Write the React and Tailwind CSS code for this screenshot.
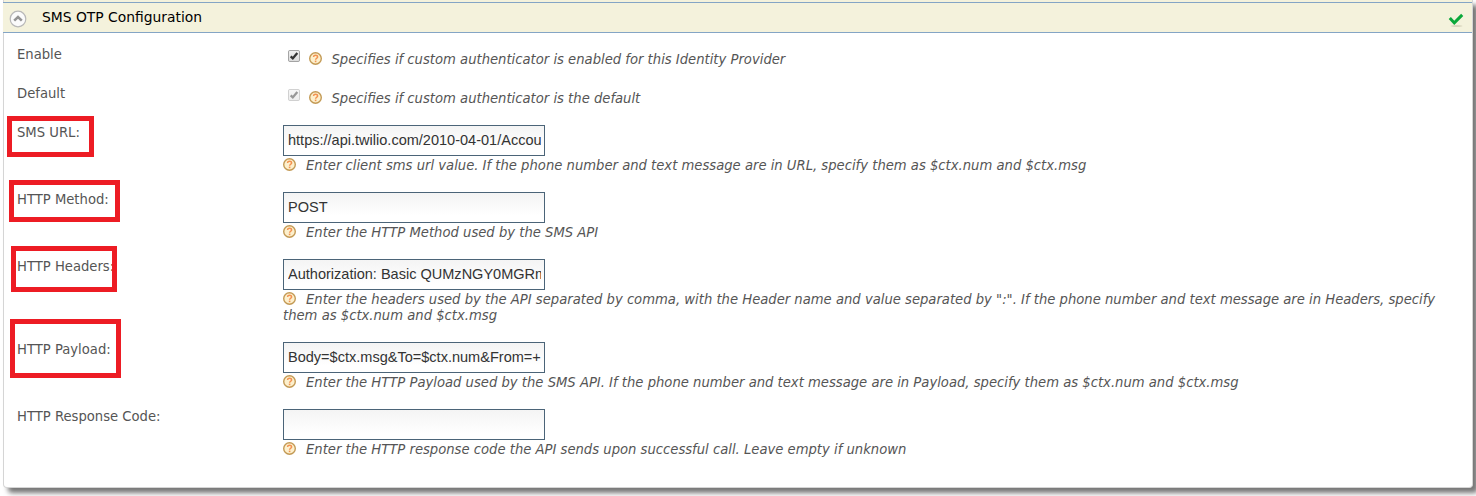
import React from "react";

function HelpIcon({ className = "" }) {
  return (
    <svg width="13" height="13" viewBox="0 0 13 13" className={"shrink-0 " + className}>
      <circle cx="6.500" cy="6.500" r="5.800" fill="#fdf0cd" stroke="#c39a55" strokeWidth="1.400" />
      <path d="M4.500 5C4.600 3.700 5.500 3.200 6.500 3.200c1.200 0 2.100.6 2.100 1.700C8.600 6.200 6.700 6.300 6.600 7.800" fill="none" stroke="#f39250" strokeWidth="1.500" />
      <rect x="5.800" y="8.600" width="1.600" height="1.600" fill="#f39250" />
    </svg>
  );
}

function CheckBox({ disabled }) {
  return (
    <svg width="12" height="12" viewBox="0 0 13 13" className="mt-[4px] shrink-0" opacity={disabled ? 0.5 : 1}>
      <defs>
        <linearGradient id="boxFill" x1="0" y1="0" x2="0" y2="1">
          <stop offset="0" stopColor="#f0f0f0" />
          <stop offset="1" stopColor="#dcdcdc" />
        </linearGradient>
      </defs>
      <rect x="0.5" y="0.5" width="12" height="12" rx="1.500" fill="url(#boxFill)" stroke="#9a9a9a" />
      <path d="M2.900 6.900L5.200 9.100L10.100 3.200" fill="none" stroke="#333" strokeWidth="2.500" />
    </svg>
  );
}

function Label({ text, mark }) {
  return (
    <div className="relative w-[279px] shrink-0 pl-[13px] pt-px">
      {text}
      {mark && <div className={"absolute border-5 border-[#ed1c24] " + mark} />}
    </div>
  );
}

function CheckRow({ label, hint, disabled }) {
  return (
    <div className="flex h-[39px]">
      <Label text={label} />
      <div className="flex pl-[5px]">
        <CheckBox disabled={disabled} />
        <HelpIcon className="ml-[9px] mt-[6px]" />
        <span className="ml-[9.500px] mt-[6px] italic">{hint}</span>
      </div>
    </div>
  );
}

function FieldRow({ label, value, hint, mark, height = "h-[67px]" }) {
  return (
    <div className={"flex " + height}>
      <Label text={label} mark={mark} />
      <div className="w-[1170px] pt-px">
        <input
          readOnly
          value={value}
          className="block h-[31px] w-[262px] border border-[#4b6478] bg-linear-to-b from-[#f4f4f4] to-white to-80% pl-[4px] pr-[3px] pb-[2px] font-['Liberation_Sans',sans-serif] text-[14.540px] text-[#333] outline-none"
        />
        <div className="mt-[2px] italic">
          <HelpIcon className="-mt-[4px] mr-[10px] inline-block align-middle" />
          {hint}
        </div>
      </div>
    </div>
  );
}

export default function App() {
  return (
    <div className="h-[496px] overflow-hidden bg-white pl-[3px] font-['DejaVu_Sans',sans-serif] text-[13.18px] leading-4 text-[#555]">
      <div className="h-[488px] w-[1470px] rounded-b-[4px] border-x border-b border-[#d5d5d5] bg-white shadow-[5px_5px_5px_#777]">
        <div className="h-[2px] bg-[#f4f2dc]" />
        <div className="-mx-px flex h-[31px] w-[1469px] items-center border-y border-[#84a5c5] bg-[#f4f2dc] text-black">
          <svg width="18" height="18" viewBox="0 0 18 18" className="ml-[6px] mt-[2px]">
            <circle cx="9" cy="9" r="7.800" fill="#fbfbfb" stroke="#b8b8b8" strokeWidth="1.200" />
            <path d="M5.200 10.700L9 7L12.800 10.700" fill="none" stroke="#949494" strokeWidth="2.500" />
          </svg>
          <span className="-mt-[2px] ml-[15px] text-[13.86px]">SMS OTP Configuration</span>
          <svg width="16" height="16" viewBox="0 0 16 16" className="ml-auto mr-[8px] mt-[4px]">
            <ellipse cx="8.500" cy="14" rx="6" ry="0.800" fill="#cfccb4" />
            <path d="M1.800 6L6.300 10.900L14.200 2.900" fill="none" stroke="#0aa83a" strokeWidth="3" />
          </svg>
        </div>
        <div className="pt-[13px]">
          <CheckRow label="Enable" hint="Specifies if custom authenticator is enabled for this Identity Provider" />
          <CheckRow label="Default" hint="Specifies if custom authenticator is the default" disabled />
          <FieldRow
            label="SMS URL:"
            value="https://api.twilio.com/2010-04-01/Accounts"
            hint="Enter client sms url value. If the phone number and text message are in URL, specify them as $ctx.num and $ctx.msg"
            mark="left-[3px] -top-[8px] h-[41px] w-[87px]"
          />
          <FieldRow
            label="HTTP Method:"
            value="POST"
            hint="Enter the HTTP Method used by the SMS API"
            mark="left-[5px] -top-[11px] h-[42px] w-[111px]"
          />
          <FieldRow
            label="HTTP Headers:"
            value="Authorization: Basic QUMzNGY0MGRm"
            hint={'Enter the headers used by the API separated by comma, with the Header name and value separated by ":". If the phone number and text message are in Headers, specify them as $ctx.num and $ctx.msg'}
            mark="left-[7px] -top-[12px] h-[46px] w-[106px]"
            height="h-[83px]"
          />
          <FieldRow
            label="HTTP Payload:"
            value="Body=$ctx.msg&To=$ctx.num&From=+"
            hint="Enter the HTTP Payload used by the SMS API. If the phone number and text message are in Payload, specify them as $ctx.num and $ctx.msg"
            mark="left-[6px] -top-[22px] h-[59px] w-[111px]"
          />
          <FieldRow
            label="HTTP Response Code:"
            value=""
            hint="Enter the HTTP response code the API sends upon successful call. Leave empty if unknown"
          />
        </div>
      </div>
    </div>
  );
}
